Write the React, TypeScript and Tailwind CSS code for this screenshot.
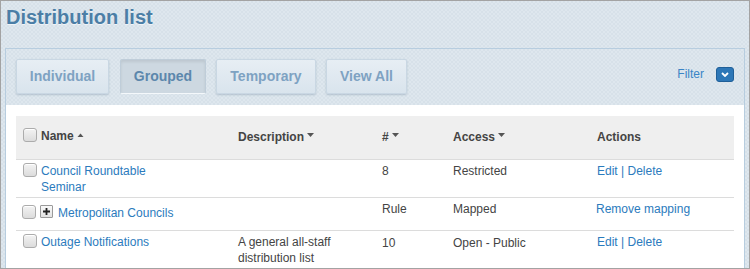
import React from "react";

const Caret = ({ up = false }: { up?: boolean }) => (
  <svg width="7" height="4" viewBox="0 0 7 4" className={"ml-[3px] shrink-0 " + (up ? "mt-[5px]" : "mt-[4px]")}>
    {up ? <path d="M0.5 4 L3.5 0.5 L6.5 4 Z" fill="#555" /> : <path d="M0 0 L7 0 L3.5 4 Z" fill="#555" />}
  </svg>
);

const Check = () => (
  <span className="block w-[14px] h-[14px] shrink-0 rounded-[3px] border border-[#acacac] bg-gradient-to-b from-[#f3f3f3] to-[#dcdcdc] shadow-[inset_0_1px_0_#fff]" />
);

const Btn = ({ label, w, active = false }: { label: string; w: string; active?: boolean }) =>
  active ? (
    <div className={w + " h-[35px] flex items-center justify-center rounded-[2px] border border-[#bfcdd9] border-b-[#f4f8fb] bg-[#cdd8e1] shadow-[inset_0_2px_3px_rgba(0,0,0,0.08)] text-[14px] font-bold text-[#5c87ac]"}>
      {label}
    </div>
  ) : (
    <div className={w + " h-[35px] flex items-center justify-center rounded-[2px] border border-[#c9d7e3] bg-gradient-to-b from-[#e7eef4] to-[#d9e4ed] shadow-[0_1px_2px_rgba(60,90,120,0.25)] text-[14px] font-bold text-[#7ea2c2]"}>
      {label}
    </div>
  );

const Link = ({ children }: { children: React.ReactNode }) => (
  <span className="text-[#2b7bbd]">{children}</span>
);

const cols = "grid grid-cols-[215px_144px_71px_144px_144px]";

export default function App() {
  return (
    <div className="w-[750px] h-[269px] overflow-hidden border border-[#a3a3a3] bg-[#dae3eb] bg-[image:repeating-conic-gradient(#d7e1e9_0_25%,#dee7ee_0_50%)] bg-[length:4px_4px] font-['Liberation_Sans',Arial,sans-serif]">
      <h1 className="pl-[5px] pt-[4px] text-[20px] leading-[24px] font-bold text-[#4b7ea6] [text-shadow:0_1px_0_rgba(255,255,255,0.6)]">
        Distribution list
      </h1>

      <div className="mt-[19px] mx-[4px] border border-[#b7cddf]">
        <div className="flex items-center pl-[10px] pr-[10px] pt-[10px] pb-[11px]">
          <div className="flex gap-[10px]">
            <Btn label="Individual" w="w-[93px] mr-[1px]" />
            <Btn label="Grouped" w="w-[86px]" active />
            <Btn label="Temporary" w="w-[100px]" />
            <Btn label="View All" w="w-[81px]" />
          </div>
          <div className="ml-auto mb-[5px] flex items-center gap-[12px]">
            <span className="text-[12px] text-[#3a85c6]">Filter</span>
            <span className="flex items-center justify-center w-[18px] h-[15px] rounded-[3px] border border-[#1f5f98] bg-[#2d77b7]">
              <svg width="8" height="5" viewBox="0 0 8 5">
                <path d="M1 1 L4 4 L7 1" fill="none" stroke="#fff" strokeWidth="1.8" />
              </svg>
            </span>
          </div>
        </div>

        <div className="bg-white px-[10px] pt-[11px] pb-[20px] text-[12px] leading-[16px] text-[#444]">
          <div className={cols + " h-[44px] items-start bg-[#efefef] border-b border-[#dcdcdc] font-bold text-[#444]"}>
            <div className="pl-[7px] pt-[12px] flex items-start">
              <Check />
              <span className="ml-[4px]">Name</span>
              <Caret up />
            </div>
            <div className="pl-[7px] pt-[13px] flex items-start">
              <span>Description</span>
              <Caret />
            </div>
            <div className="pl-[7px] pt-[13px] flex items-start">
              <span>#</span>
              <Caret />
            </div>
            <div className="pl-[7px] pt-[13px] flex items-start">
              <span>Access</span>
              <Caret />
            </div>
            <div className="pl-[7px] pt-[13px]">Actions</div>
          </div>

          <div className={cols + " h-[38px] pt-[3px] border-b border-[#dcdcdc]"}>
            <div className="pl-[7px] flex items-start">
              <Check />
              <span className="ml-[4px] max-w-[135px]">
                <Link>Council Roundtable Seminar</Link>
              </span>
            </div>
            <div className="pl-[7px]" />
            <div className="pl-[7px]">8</div>
            <div className="pl-[7px]">Restricted</div>
            <div className="pl-[7px]">
              <Link>Edit | Delete</Link>
            </div>
          </div>

          <div className={cols + " h-[33px] pt-[3px] border-b border-[#dcdcdc]"}>
            <div className="pl-[6px] pt-[4px] flex items-start">
              <Check />
              <span className="ml-[4px] flex items-center justify-center w-[13px] h-[13px] border border-[#9a9a9a] rounded-[1px] bg-gradient-to-b from-[#fafafa] to-[#e2e2e2]">
                <svg width="9" height="9" viewBox="0 0 9 9">
                  <path d="M4.5 1 V8 M1 4.5 H8" stroke="#222" strokeWidth="1.8" />
                </svg>
              </span>
              <span className="ml-[5px]">
                <Link>Metropolitan Councils</Link>
              </span>
            </div>
            <div className="pl-[7px]" />
            <div className="pl-[7px]">Rule</div>
            <div className="pl-[7px]">Mapped</div>
            <div className="pl-[6px]">
              <Link>Remove mapping</Link>
            </div>
          </div>

          <div className={cols + " pt-[3px]"}>
            <div className="pl-[7px] flex items-start">
              <Check />
              <span className="ml-[4px] max-w-[135px]">
                <Link>Outage Notifications</Link>
              </span>
            </div>
            <div className="pl-[7px] pr-[8px]">A general all-staff distribution list</div>
            <div className="pl-[7px] pt-[1px]">10</div>
            <div className="pl-[7px] pt-[1px]">Open - Public</div>
            <div className="pl-[7px]">
              <Link>Edit | Delete</Link>
            </div>
          </div>
        </div>
      </div>
    </div>
  );
}
